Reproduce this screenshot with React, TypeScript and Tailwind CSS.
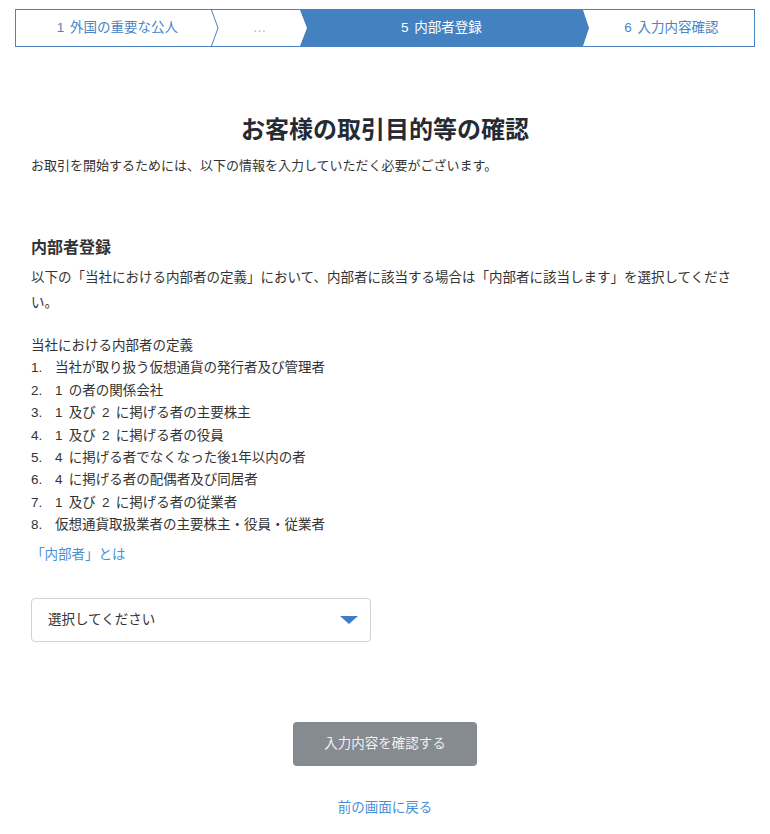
import React from 'react';

const font = "[font-family:'Liberation_Sans','Noto_Sans_CJK_JP',sans-serif]";

const definitions = [
  '当社が取り扱う仮想通貨の発行者及び管理者',
  '1 の者の関係会社',
  '1 及び 2 に掲げる者の主要株主',
  '1 及び 2 に掲げる者の役員',
  '4 に掲げる者でなくなった後1年以内の者',
  '4 に掲げる者の配偶者及び同居者',
  '1 及び 2 に掲げる者の従業者',
  '仮想通貨取扱業者の主要株主・役員・従業者',
];

function Stepper() {
  return (
    <div className="flex h-[38px] border border-[#4a82c2] bg-white text-[13.5px] [word-spacing:2px]">
      {/* step 1 */}
      <div className="relative flex w-[203px] items-center justify-center text-[#4a86c6]">
        1 外国の重要な公人
        <svg className="absolute right-0 top-0 h-full w-[8px]" viewBox="0 0 8 36" preserveAspectRatio="none">
          <polyline points="0.5,0 7,18 0.5,36" fill="none" stroke="#4a82c2" strokeWidth="1" />
        </svg>
      </div>
      {/* step 2 */}
      <div className="flex w-[81px] items-center justify-center text-[#8dbbe6]">…</div>
      {/* active step */}
      <div className="flex w-[289px] items-center justify-center bg-[#4381c1] pr-[6px] text-white [clip-path:polygon(0_0,283px_0,289px_50%,283px_100%,0_100%,7px_50%)]">
        5 内部者登録
      </div>
      {/* step 6 */}
      <div className="flex flex-1 items-center justify-center text-[#4a86c6]">6 入力内容確認</div>
    </div>
  );
}

export default function App() {
  return (
    <div className={`min-h-[834px] bg-white px-[15px] pt-[9px] ${font}`}>
      <Stepper />

      <div className="px-[16px]">
        <h1 className="mt-[67px] text-center text-[24px] font-bold leading-[32px] text-[#252a33]">
          お客様の取引目的等の確認
        </h1>
        <p className="mt-[9px] text-[13px] leading-[22px] text-[#333]">
          お取引を開始するためには、以下の情報を入力していただく必要がございます。
        </p>

        <h2 className="mt-[59px] text-[16px] font-bold leading-[24px] text-[#333]">内部者登録</h2>
        <p className="mt-[5px] text-[13.5px] leading-[25px] text-[#333]">
          以下の「当社における内部者の定義」において、内部者に該当する場合は「内部者に該当します」を選択してください。
        </p>

        <div className="mt-[20px] text-[13.5px] leading-[22.4px] text-[#333]">
          <p>当社における内部者の定義</p>
          {definitions.map((d, i) => (
            <p key={d} className="flex [word-spacing:2.5px]">
              <span className="w-[24px] shrink-0">{i + 1}.</span>
              <span>{d}</span>
            </p>
          ))}
        </div>

        <a className="mt-[7px] block text-[13.5px] leading-[22px] text-[#4a8fd5]" href="#">
          「内部者」とは
        </a>

        <div className="mt-[32px] flex h-[44px] w-[340px] items-center justify-between rounded-[4px] border border-[#cfd3d8] pl-[16px] pr-[12px]">
          <span className="text-[13.5px] text-[#333]">選択してください</span>
          <svg width="18" height="8" viewBox="0 0 18 8">
            <polygon points="0,0 18,0 9,8" fill="#3d7ec6" />
          </svg>
        </div>

        <div className="mt-[80px] flex justify-center">
          <button className="h-[44px] w-[184px] rounded-[4px] bg-[#868a91] text-[13.5px] text-[#eef0f2]">
            入力内容を確認する
          </button>
        </div>

        <div className="mt-[32px] flex justify-center">
          <a className="text-[13.5px] leading-[20px] text-[#4a8fd5]" href="#">
            前の画面に戻る
          </a>
        </div>
      </div>
    </div>
  );
}
